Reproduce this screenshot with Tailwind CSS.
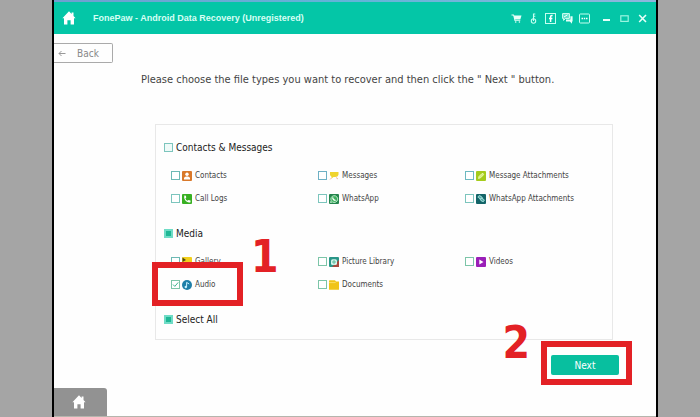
<!DOCTYPE html>
<html lang="en">
<head>
    <meta charset="UTF-8">
    <meta name="viewport" content="width=device-width, initial-scale=1.0">
    <title>FonePaw - Android Data Recovery</title>
    <script src="https://cdn.jsdelivr.net/npm/@tailwindcss/browser@4"></script>
</head>
<body class="bg-[#a5a5a5] font-['DejaVu_Sans_Condensed','DejaVu_Sans',sans-serif] text-[#444]">

    <!-- Shared icon shapes -->
    <svg class="hidden">
        <symbol id="home" viewBox="0 0 14 14">
            <path fill="#fff" d="M7 0.3 L9.6 3 V1.5 H11.5 V5 L13.6 7.3 H12 V13.6 H8.6 V9.3 H5.4 V13.6 H2 V7.3 H0.4 Z"/>
        </symbol>
    </svg>

    <div class="relative mr-[42px] ml-[52px] flex min-h-screen flex-col border-x-2 border-black bg-[#fefefe]">
        <div class="h-[2px] bg-gradient-to-r from-[#6f9fd0] via-[#62b4d8] to-[#8eb6dc]"></div>

        <!-- Title bar -->
        <header class="flex h-8 items-center bg-[#04c6a7] pr-2 pl-2 text-white">
            <svg class="size-[14px]"><use href="#home"/></svg>
            <h1 class="ml-[17px] flex-1 pt-[2px] font-['Liberation_Sans',sans-serif] text-[9px] font-bold whitespace-nowrap text-[#d6fff4]">FonePaw - Android Data Recovery (Unregistered)</h1>
            <div class="flex items-center gap-[6px]">
                <button type="button" aria-label="Buy"><svg class="size-[11px]" viewBox="0 0 11 11"><path fill="#e6fff9" d="M0.5 1.5 H2.8 L3.3 2.6 H10.5 L9.3 6.6 H4.2 L4.3 7.3 H9.3 V8 H3.6 L2.2 2.4 H0.5 Z"/><circle cx="4.7" cy="9" r="0.8" fill="#e6fff9"/><circle cx="8.4" cy="9" r="0.8" fill="#e6fff9"/></svg></button>
                <button type="button" aria-label="Register"><svg class="size-[11px]" viewBox="0 0 11 11" fill="none" stroke="#c4fff0" stroke-width="1.1"><circle cx="5.5" cy="8" r="2.2"/><path d="M5.5 8 V0.5 M5.5 1 H7.3 M5.5 3.2 H7.3"/></svg></button>
                <button type="button" aria-label="Facebook"><svg class="size-[11px]" viewBox="0 0 11 11"><rect x="0.5" y="0.5" width="10" height="10" fill="none" stroke="#c4fff0"/><path d="M7.6 2.6 H6.8 Q5.6 2.6 5.6 3.8 V9 M4 5.4 H7.4" fill="none" stroke="#fff" stroke-width="1.5"/></svg></button>
                <button type="button" aria-label="Feedback"><svg class="size-[11px]" viewBox="0 0 11 11"><path d="M0.6 0.6 H7.4 V5.4 H3.5 L1.6 7.4 V5.4 H0.6 Z" fill="#5ddfc8" stroke="#d6fff4"/><path d="M2 4 L5.5 1.8" stroke="#fff"/><path d="M8.4 3.2 H10.6 V8.6 H10 V10.8 L7.8 8.6 H4 V6.6 H8.4 Z" fill="#e6fff9"/></svg></button>
                <button type="button" aria-label="Menu"><svg class="size-[11px]" viewBox="0 0 11 11"><rect x="0.5" y="1" width="10" height="9" rx="0.8" fill="none" stroke="#c4fff0"/><path d="M2.5 5.5 H4 M4.8 5.5 H6.2 M7 5.5 H8.5" stroke="#fff" stroke-width="1.3"/></svg></button>
            </div>
            <div class="ml-[11px] flex items-center gap-[7px]">
                <button type="button" aria-label="Minimize"><svg class="size-[11px]" viewBox="0 0 11 11"><path d="M2 7 H9" stroke="#e6fff9" stroke-width="2"/></svg></button>
                <button type="button" aria-label="Maximize"><svg class="size-[11px]" viewBox="0 0 11 11"><rect x="1.8" y="2.8" width="7.4" height="5.6" fill="none" stroke="#9af5e0" stroke-width="1.2"/></svg></button>
                <button type="button" aria-label="Close"><svg class="size-[11px]" viewBox="0 0 11 11"><path d="M2.2 2 L9 9 M9 2 L2.2 9" stroke="#e6fff9" stroke-width="1.6"/></svg></button>
            </div>
        </header>

        <button type="button" class="mt-[9px] flex h-5 w-[59px] items-center gap-[11px] rounded-r-[2px] border border-l-0 border-[#aaa] pl-1 text-[10px] text-[#888]">
            <svg class="h-[7px] w-2" viewBox="0 0 8 7" fill="none" stroke="#999"><path d="M7.5 3.5 H1 M3.5 1 L1 3.5 L3.5 6"/></svg>
            Back
        </button>

        <p class="mt-[9px] pl-[87px] text-[11px] leading-4 whitespace-nowrap text-[#444]">Please choose the file types you want to recover and then click the " Next " button.</p>

        <!-- File types -->
        <form class="mt-9 mr-[43px] ml-[101px] flex flex-col gap-[11px] border border-[#e8e8e8] pt-[10px] pb-2 pl-2">
            <section>
                <label class="flex h-6 items-center gap-[3px] text-[10px] text-[#222]">
                    <input type="checkbox" class="size-[9px] appearance-none border border-[#7cc5bd] bg-[#effaf8]">
                    Contacts &amp; Messages
                </label>
                <div class="mt-[5px] grid grid-cols-3 pl-[7px] text-[8px]">
                    <label class="flex h-[23px] items-center gap-[2px] whitespace-nowrap">
                        <input type="checkbox" class="size-[9px] appearance-none border border-[#6db9b4] bg-white">
                        <svg class="mr-px size-[10px]" viewBox="0 0 10 10"><rect width="10" height="10" rx="1" fill="#d9792b"/><circle cx="5" cy="3.3" r="1.7" fill="#fff"/><path d="M2 8.5 V7 Q2.5 5.6 4.2 5.4 H5.8 Q7.5 5.6 8 7 V8.5 Z" fill="#fff"/></svg>
                        Contacts
                    </label>
                    <label class="flex h-[23px] items-center gap-[2px] whitespace-nowrap">
                        <input type="checkbox" class="size-[9px] appearance-none border border-[#6db0c4] bg-white">
                        <svg class="mr-px size-[10px]" viewBox="0 0 10 10"><path d="M1 1 H9.5 V3.5 Q9 6 6 6 H4.5 L2.5 7.5 V5.8 Q1 5 1 3.5 Z" fill="#efd42e"/><path d="M1 8.5 L2.5 7 M7 6.5 L9 8" stroke="#f0b59c"/></svg>
                        Messages
                    </label>
                    <label class="flex h-[23px] items-center gap-[2px] whitespace-nowrap">
                        <input type="checkbox" class="size-[9px] appearance-none border border-[#6db9c0] bg-white">
                        <svg class="mr-px size-[10px]" viewBox="0 0 10 10"><rect width="10" height="10" rx="1" fill="#a5cc1c"/><path d="M2.5 7.5 L3 5.5 L6 2.5 Q7.5 2 7.6 3.7 L4.6 6.8 Z" fill="#d8f07a" stroke="#effac0" stroke-width="0.8"/></svg>
                        Message Attachments
                    </label>
                    <label class="flex h-[23px] items-center gap-[2px] whitespace-nowrap">
                        <input type="checkbox" class="size-[9px] appearance-none border border-[#7cc5bd] bg-white">
                        <svg class="mr-px size-[10px]" viewBox="0 0 10 10"><rect width="10" height="10" rx="1" fill="#38b022"/><path d="M2.3 1.5 L4 1.8 L4.2 3.8 L3.4 4.4 Q4 6 5.7 6.7 L6.4 5.9 L8.5 6.6 V8.2 Q7 9.2 4.8 7.8 Q1.5 5.5 2.3 1.5 Z" fill="#fff"/></svg>
                        Call Logs
                    </label>
                    <label class="flex h-[23px] items-center gap-[2px] whitespace-nowrap">
                        <input type="checkbox" class="size-[9px] appearance-none border border-[#7cc5bd] bg-white">
                        <svg class="mr-px size-[10px]" viewBox="0 0 10 10"><rect width="10" height="10" rx="1" fill="#24844d"/><path d="M1.5 8.5 L2.2 6.6 A3.4 3.4 0 1 1 3.5 8 Z" fill="#3fae5f" stroke="#c9f5d3" stroke-width="0.9"/><path d="M3.6 3.4 Q3.8 6 6.6 6.5" fill="none" stroke="#fff" stroke-width="1.1"/></svg>
                        WhatsApp
                    </label>
                    <label class="flex h-[23px] items-center gap-[2px] whitespace-nowrap">
                        <input type="checkbox" class="size-[9px] appearance-none border border-[#7cc5bd] bg-white">
                        <svg class="mr-px size-[10px]" viewBox="0 0 10 10"><rect width="10" height="10" rx="1" fill="#136468"/><rect x="2.3" y="2" width="4" height="2.4" rx="1" transform="rotate(30 4 3)" fill="#4fa6a3" stroke="#b9eeea" stroke-width="0.8"/><rect x="4.2" y="4.6" width="4" height="2.4" rx="1" transform="rotate(30 6 6)" fill="#4fa6a3" stroke="#b9eeea" stroke-width="0.8"/></svg>
                        WhatsApp Attachments
                    </label>
                </div>
            </section>

            <section>
                <label class="flex h-6 items-center gap-[3px] text-[10px] text-[#222]">
                    <input type="checkbox" checked class="size-[9px] appearance-none border-2 border-[#6fdcc6] bg-[#1fb795]">
                    Media
                </label>
                <div class="mt-[5px] grid grid-cols-3 pl-[7px] text-[8px]">
                    <label class="flex h-[23px] items-center gap-[2px] whitespace-nowrap">
                        <input type="checkbox" class="size-[9px] appearance-none border border-[#6db9b4] bg-white">
                        <svg class="mr-px size-[10px]" viewBox="0 0 10 10"><rect width="10" height="10" rx="1" fill="#f2cf1d"/><path d="M0.5 0.5 L4 3 L0.5 5 Z" fill="#4b4a1a"/><path d="M4 9 L6.5 5 L9 9 Z" fill="#e6a713"/></svg>
                        Gallery
                    </label>
                    <label class="flex h-[23px] items-center gap-[2px] whitespace-nowrap">
                        <input type="checkbox" class="size-[9px] appearance-none border border-[#7cc5a8] bg-white">
                        <svg class="mr-px size-[10px]" viewBox="0 0 10 10"><rect width="10" height="10" rx="1" fill="#2a9688"/><path d="M10 3 V10 H3 Z" fill="#a8483c"/><rect x="2" y="2.2" width="6" height="5.8" rx="1.6" fill="#d5f3ea"/><path d="M3 5 H7 M5 3 V7.2" stroke="#54b596" stroke-width="0.9"/></svg>
                        Picture Library
                    </label>
                    <label class="flex h-[23px] items-center gap-[2px] whitespace-nowrap">
                        <input type="checkbox" class="size-[9px] appearance-none border border-[#7cc5a8] bg-white">
                        <svg class="mr-px size-[10px]" viewBox="0 0 10 10"><rect width="10" height="10" rx="1" fill="#9a1fb8"/><path d="M3.3 2.5 L7.5 5 L3.3 7.5 Z" fill="#fff"/></svg>
                        Videos
                    </label>
                    <label class="flex h-[23px] items-center gap-[2px] whitespace-nowrap">
                        <span class="relative flex">
                            <input type="checkbox" checked class="size-[9px] appearance-none border border-[#7cc5a8] bg-white">
                            <svg class="pointer-events-none absolute inset-0 size-[9px]" viewBox="0 0 9 9"><path d="M2 4.5 L3.8 6.4 L7.2 2.4" fill="none" stroke="#3fb58f"/></svg>
                        </span>
                        <svg class="mr-px size-[10px]" viewBox="0 0 10 10"><circle cx="5" cy="5" r="5" fill="#1f7fa8"/><path d="M4.6 7 V2.4 L7.2 4" fill="none" stroke="#c8f0ff"/><circle cx="3.8" cy="7" r="1.2" fill="#c8f0ff"/></svg>
                        Audio
                    </label>
                    <label class="flex h-[23px] items-center gap-[2px] whitespace-nowrap">
                        <input type="checkbox" class="size-[9px] appearance-none border border-[#7cc5a8] bg-white">
                        <svg class="mr-px size-[10px]" viewBox="0 0 10 10"><path d="M0 1 Q0 0.3 0.7 0.3 H6 L7 1.5 H10 V9.7 H0 Z" fill="#f0c419"/><path d="M0 2.6 H6.3 L7.3 1.6" fill="none" stroke="#fbe37a" stroke-width="0.8"/></svg>
                        Documents
                    </label>
                </div>
            </section>

            <label class="flex h-6 items-center gap-[3px] text-[10px] text-[#222]">
                <input type="checkbox" checked class="size-[9px] appearance-none border-2 border-[#6fdcc6] bg-[#1fb795]">
                Select All
            </label>
        </form>

        <!-- Next button with its callout -->
        <div class="relative mt-px mr-6 self-end border-6 border-[#e32125] pt-2 pr-[7px] pb-1 pl-1">
            <button type="button" class="block h-5 w-[68px] rounded-[2px] bg-[#08bf9f] text-[10px] text-white">Next</button>
            <span class="absolute top-[-26px] right-[96px] text-[44px] leading-[44px] font-bold text-[#e32125]">2</span>
        </div>

        <footer class="mt-auto border-b border-[#b5b5ad]">
            <a href="#" aria-label="Home" class="flex h-7 w-[53px] items-center justify-center rounded-tr-[3px] bg-[#929292] pr-1">
                <svg class="size-[14px]"><use href="#home"/></svg>
            </a>
        </footer>

        <!-- Callout around Audio -->
        <div class="pointer-events-none absolute top-[262px] left-[98px] h-[44px] w-[91px] border-6 border-[#e32125]"></div>
        <span class="absolute top-[235px] left-[197px] text-[44px] leading-[44px] font-bold text-[#e32125]">1</span>
    </div>

</body>
</html>
